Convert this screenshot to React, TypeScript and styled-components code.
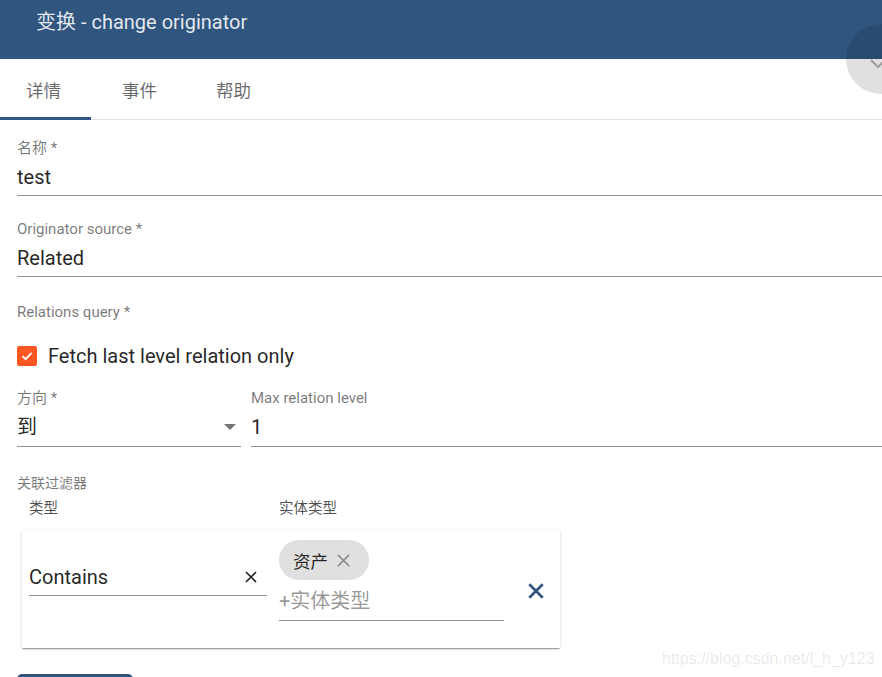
import React from 'react';
import styled, { createGlobalStyle } from 'styled-components';

const GlobalStyle = createGlobalStyle`
  html, body {
    margin: 0;
    padding: 0;
    background: #fff;
  }
  body {
    font-family: Roboto, "Noto Sans CJK SC", sans-serif;
    overflow: hidden;
  }
`;

const PRIMARY = '#305680';

const Page = styled.div`
  position: relative;
  width: 882px;
  height: 677px;
  overflow: hidden;
  background: #fff;
`;

const Header = styled.header`
  height: 59px;
  background: ${PRIMARY};
  padding: 10px 0 0 36px;
  box-sizing: border-box;
`;

const Title = styled.h1`
  margin: 0;
  font-size: 20px;
  line-height: 24px;
  font-weight: 400;
  color: rgba(255, 255, 255, 0.88);
`;

const Fab = styled.div`
  position: absolute;
  left: 846px;
  top: 24px;
  width: 70px;
  height: 70px;
  border-radius: 50%;
  background: rgba(0, 0, 0, 0.12);
`;

const FabIcon = styled.svg`
  position: absolute;
  left: 24px;
  top: 35px;
`;

const TabBar = styled.nav`
  display: flex;
  height: 60px;
  border-bottom: 1px solid #e2e2e2;
`;

const Tab = styled.div<{ $active?: boolean; $width: number }>`
  position: relative;
  width: ${(p) => p.$width}px;
  padding-left: 26px;
  box-sizing: border-box;
  display: flex;
  align-items: center;
  font-size: 17.5px;
  color: rgba(0, 0, 0, 0.6);

  &::after {
    content: '';
    display: ${(p) => (p.$active ? 'block' : 'none')};
    position: absolute;
    left: 0;
    bottom: -1px;
    width: 91px;
    height: 3px;
    background: ${PRIMARY};
  }
`;

const Form = styled.form`
  display: flex;
  flex-direction: column;
  padding-left: 17px;
`;

const Field = styled.div<{ $top: number; $width?: number }>`
  margin-top: ${(p) => p.$top}px;
  width: ${(p) => (p.$width ? `${p.$width}px` : 'auto')};
  flex: ${(p) => (p.$width ? '0 0 auto' : '1')};
`;

const Label = styled.div`
  font-size: 15px;
  line-height: 18px;
  color: rgba(0, 0, 0, 0.54);
`;

const Input = styled.div<{ $placeholder?: boolean; $tight?: boolean }>`
  display: flex;
  align-items: center;
  justify-content: space-between;
  margin-top: ${(p) => (p.$tight ? 0 : 8)}px;
  padding-bottom: 6px;
  border-bottom: 1px solid rgba(0, 0, 0, 0.42);
  font-size: 20px;
  line-height: 24px;
  color: ${(p) => (p.$placeholder ? 'rgba(0, 0, 0, 0.42)' : 'rgba(0, 0, 0, 0.87)')};
`;

const CheckRow = styled.label`
  display: flex;
  align-items: center;
  gap: 11px;
  margin-top: 23px;
  height: 24px;
  font-size: 20px;
  color: rgba(0, 0, 0, 0.87);
`;

const CheckBox = styled.span`
  display: flex;
  align-items: center;
  justify-content: center;
  width: 20px;
  height: 20px;
  border-radius: 2px;
  background: #ff5722;
`;

const Row = styled.div`
  display: flex;
  gap: 10px;
`;

const SelectInput = styled(Input)`
  padding-bottom: 7px;
`;

const Arrow = styled.span`
  width: 0;
  height: 0;
  margin-right: 5px;
  border-left: 6px solid transparent;
  border-right: 6px solid transparent;
  border-top: 6px solid rgba(0, 0, 0, 0.54);
`;

const FilterLabel = styled.div`
  margin-top: 27px;
  font-size: 14px;
  line-height: 18px;
  color: rgba(0, 0, 0, 0.54);
`;

const ColumnHeads = styled.div`
  display: flex;
  padding-left: 12px;
  margin-top: 8px;
  font-size: 14.5px;
  line-height: 18px;
  color: rgba(0, 0, 0, 0.7);
`;

const ColumnHead = styled.div<{ $width: number }>`
  width: ${(p) => p.$width}px;
`;

const Card = styled.div`
  display: flex;
  align-items: center;
  width: 538px;
  box-sizing: border-box;
  margin: 12px 0 0 5px;
  padding: 10px 0 27px 7px;
  background: #fff;
  box-shadow: 0 2px 1px -1px rgba(0, 0, 0, 0.2), 0 1px 1px 0 rgba(0, 0, 0, 0.14),
    0 1px 3px 0 rgba(0, 0, 0, 0.12);
`;

const TypeField = styled.div`
  width: 238px;
  margin-right: 12px;
`;

const ClearIcon = styled.svg`
  margin-right: 8px;
`;

const EntityColumn = styled.div`
  width: 225px;
  display: flex;
  flex-direction: column;
`;

const Chip = styled.span`
  align-self: flex-start;
  display: inline-flex;
  align-items: center;
  gap: 8px;
  height: 40px;
  padding: 0 18px 0 14px;
  border-radius: 20px;
  background: #e0e0e0;
  font-size: 17.5px;
  color: rgba(0, 0, 0, 0.87);
`;

const EntityInput = styled(Input)`
  margin-top: 9px;
  padding-bottom: 7px;
`;

const RemoveButton = styled.button`
  display: flex;
  align-items: center;
  justify-content: center;
  margin: 20px 0 0 23px;
  padding: 0;
  border: 0;
  background: none;
`;

const SaveButton = styled.div`
  margin-top: 26px;
  width: 116px;
  height: 36px;
  border-radius: 5px;
  background: ${PRIMARY};
`;

const Watermark = styled.div`
  position: absolute;
  left: 662px;
  top: 649px;
  font-family: "Liberation Sans", Arial, sans-serif;
  font-size: 16px;
  line-height: 20px;
  color: rgba(0, 0, 0, 0.1);
`;

const Cross: React.FC<{ size: number; color: string; stroke: number }> = ({ size, color, stroke }) => (
  <svg width={size} height={size} viewBox="0 0 16 16">
    <path d="M2 2 L14 14 M14 2 L2 14" stroke={color} strokeWidth={stroke} fill="none" />
  </svg>
);

const App: React.FC = () => (
  <Page>
    <GlobalStyle />
    <Header>
      <Title>变换 - change originator</Title>
    </Header>

    <TabBar>
      <Tab $active $width={96}>详情</Tab>
      <Tab $width={94}>事件</Tab>
      <Tab $width={96}>帮助</Tab>
    </TabBar>

    <Form>
      <Field $top={19}>
        <Label>名称 *</Label>
        <Input>test</Input>
      </Field>

      <Field $top={24}>
        <Label>Originator source *</Label>
        <Input>Related</Input>
      </Field>

      <Field $top={26}>
        <Label>Relations query *</Label>
      </Field>

      <CheckRow>
        <CheckBox>
          <svg width="14" height="14" viewBox="0 0 14 14">
            <path d="M2.5 7.2 L5.6 10.2 L11.6 3.8" stroke="#fff" strokeWidth="1.8" fill="none" />
          </svg>
        </CheckBox>
        Fetch last level relation only
      </CheckRow>

      <Row>
        <Field $top={21} $width={224}>
          <Label>方向 *</Label>
          <SelectInput>
            到
            <Arrow />
          </SelectInput>
        </Field>
        <Field $top={21}>
          <Label>Max relation level</Label>
          <SelectInput>1</SelectInput>
        </Field>
      </Row>

      <FilterLabel>关联过滤器</FilterLabel>
      <ColumnHeads>
        <ColumnHead $width={250}>类型</ColumnHead>
        <ColumnHead $width={120}>实体类型</ColumnHead>
      </ColumnHeads>

      <Card>
        <TypeField>
          <Input $tight>
            Contains
            <ClearIcon width="16" height="16" viewBox="0 0 16 16">
              <path d="M3 3 L13 13 M13 3 L3 13" stroke="rgba(0,0,0,0.87)" strokeWidth="1.6" fill="none" />
            </ClearIcon>
          </Input>
        </TypeField>
        <EntityColumn>
          <Chip>
            资产
            <Cross size={15} color="rgba(0,0,0,0.38)" stroke={1.6} />
          </Chip>
          <EntityInput $placeholder>+实体类型</EntityInput>
        </EntityColumn>
        <RemoveButton>
          <Cross size={18} color={PRIMARY} stroke={2.4} />
        </RemoveButton>
      </Card>

      <SaveButton />
    </Form>

    <Fab>
      <FabIcon width="16" height="10" viewBox="0 0 16 10">
        <path d="M1 1 L8 8 L15 1" stroke="#9e9e9e" strokeWidth="2" fill="none" />
      </FabIcon>
    </Fab>

    <Watermark>https://blog.csdn.net/l_h_y123</Watermark>
  </Page>
);

export default App;
